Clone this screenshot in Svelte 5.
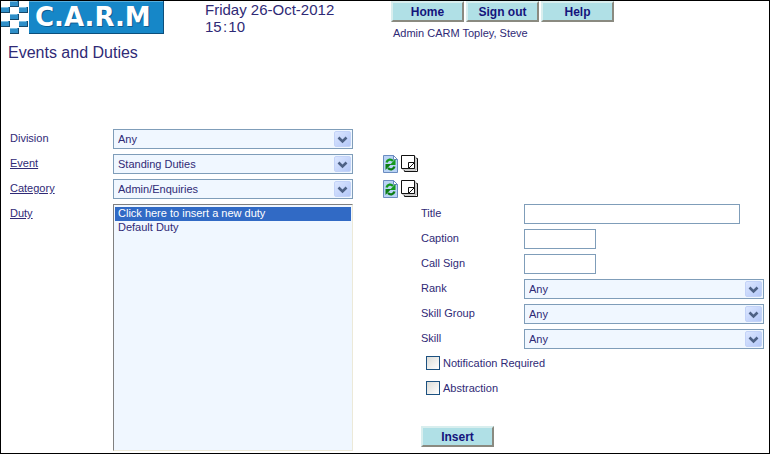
<script>
  const menu = ['Home', 'Sign out', 'Help'];

  let filters = [
    { id: 'division', label: 'Division', value: 'Any', link: false },
    { id: 'event', label: 'Event', value: 'Standing Duties', link: true },
    { id: 'category', label: 'Category', value: 'Admin/Enquiries', link: true }
  ];

  let duties = ['Click here to insert a new duty', 'Default Duty'];
  let duty = duties[0];

  let fields = [
    { id: 'title', label: 'Title', type: 'text', wide: true },
    { id: 'caption', label: 'Caption', type: 'text' },
    { id: 'callsign', label: 'Call Sign', type: 'text' },
    { id: 'rank', label: 'Rank', type: 'select' },
    { id: 'skillgroup', label: 'Skill Group', type: 'select' },
    { id: 'skill', label: 'Skill', type: 'select' }
  ];

  let checks = [
    { id: 'notify', label: 'Notification Required' },
    { id: 'abstraction', label: 'Abstraction' }
  ];

  // blue squares of the chequered band, [x, y]
  const squares = [[9, 0], [0, 6], [18, 6], [9, 13], [0, 20], [18, 20], [9, 27]];
</script>

{#snippet arrow()}
  <span class="arrow">
    <svg viewBox="0 0 15 15" width="15" height="15" aria-hidden="true">
      <path d="M3.5 5.5l4 4 4-4" fill="none" stroke="#4d6185" stroke-width="2.6" />
    </svg>
  </span>
{/snippet}

<div class="page">
  <header>
    <svg class="logo" viewBox="0 0 163 33" width="163" height="33" role="img" aria-label="C.A.R.M">
      <rect x="28" y="0" width="135" height="33" fill="#0c4f7c" />
      <rect x="28" y="0" width="134" height="32" fill="#1687c8" />
      <path d="M28 .5H162" stroke="#58aedd" />
      {#each squares as [x, y]}
        <rect {x} {y} width="9" height="6" fill="#16496b" />
        <rect {x} {y} width="8" height="5" fill="#2f8fc8" />
        <rect {x} {y} width="7" height="1" fill="#7fbfe2" />
      {/each}
      <text x="35" y="26" fill="#0d5c91">C.A.R.M</text>
      <text x="34" y="25" fill="#fff">C.A.R.M</text>
    </svg>
    <div class="date">Friday 26-Oct-2012<br />15&hairsp;:&hairsp;10</div>
    <div class="account">
      <nav>
        {#each menu as item}
          <button type="button">{item}</button>
        {/each}
      </nav>
      <div class="user">Admin CARM Topley, Steve</div>
    </div>
  </header>

  <h1>Events and Duties</h1>

  <main>
    {#each filters as f}
      <div class="row">
        <label for={f.id}>
          {#if f.link}<a href="#{f.id}">{f.label}</a>{:else}{f.label}{/if}
        </label>
        <div class="combo">
          <select id={f.id}><option>{f.value}</option></select>
          {@render arrow()}
        </div>
        {#if f.link}
          <div class="tools">
            <button type="button" class="icon" aria-label="Refresh {f.label}">
              <svg viewBox="0 0 15 18" width="15" height="18">
                <path d="M.5 .5h10l4 4v13h-14z" fill="#b9d3f5" stroke="#6b8cc0" />
                <path d="M10.5 .5v4h4z" fill="#fff" stroke="#6b8cc0" />
                <path d="M3.500 7.500C4.500 4.200 8 3.800 10 6" fill="none" stroke="#159a1c" stroke-width="2.400" />
                <path d="M12.500 4v6H6.800z" fill="#159a1c" />
                <path d="M11.500 11.500C10.500 14.800 7 15.200 5 13" fill="none" stroke="#0b7d13" stroke-width="2.400" />
                <path d="M2.500 15V9h5.700z" fill="#0b7d13" />
              </svg>
            </button>
            <button type="button" class="icon" aria-label="New {f.label}">
              <svg viewBox="0 0 17 18" width="17" height="18" fill="#fff" stroke="#111">
                <path d="M3.5 3.5h13v13h-13z" />
                <path d="M2 2h13v13H2z" stroke="#999" />
                <path d="M.5 .5h13v13H.5z" />
                <path d="M7.5 7.5h6v6h-6zM8 13l5-5" />
              </svg>
            </button>
          </div>
        {/if}
      </div>
    {/each}

    <div class="duty">
      <label for="duty"><a href="#duty">Duty</a></label>
      <select id="duty" class="list" size="17" bind:value={duty}>
        {#each duties as d}
          <option value={d}>{d}</option>
        {/each}
      </select>

      <form>
        {#each fields as f}
          <div class="row">
            <label for={f.id}>{f.label}</label>
            {#if f.type === 'select'}
              <div class="combo">
                <select id={f.id}><option>Any</option></select>
                {@render arrow()}
              </div>
            {:else}
              <input type="text" id={f.id} class:wide={f.wide} />
            {/if}
          </div>
        {/each}
        {#each checks as c}
          <div class="check">
            <input type="checkbox" id={c.id} />
            <label for={c.id}>{c.label}</label>
          </div>
        {/each}
        <button type="button" class="insert">Insert</button>
      </form>
    </div>
  </main>
</div>

<style>
  :global(body) {
    margin: 0;
    background: #fff;
  }
  .page {
    box-sizing: border-box;
    min-height: 100vh;
    border: 1px solid #000;
    font-family: "Liberation Sans", Arial, sans-serif;
    font-size: 11px;
    color: #2f2a76;
  }
  .page * {
    box-sizing: border-box;
  }
  header {
    display: flex;
    height: 42px;
  }
  .logo {
    flex: none;
  }
  .logo text {
    font: bold 26px "DejaVu Sans", sans-serif;
  }
  .date {
    width: 186px;
    margin-left: 41px;
    font-size: 15px;
    line-height: 17px;
  }
  nav {
    display: flex;
    gap: 2px;
  }
  button {
    width: 73px;
    height: 21px;
    padding: 0;
    border: 2px solid;
    border-color: #d8eeee #8a8a80 #8a8a80 #d8eeee;
    background: #b0e0e6;
    color: #14147c;
    font: bold 12px "Liberation Sans", Arial, sans-serif;
  }
  .user {
    padding: 4px 2px;
    line-height: 14px;
  }
  h1 {
    margin: 0 0 0 7px;
    font-size: 16px;
    font-weight: normal;
    line-height: 20px;
  }
  main {
    padding: 66px 5px 0 9px;
  }
  .row {
    display: flex;
    height: 20px;
    margin-bottom: 5px;
  }
  label {
    flex: none;
    width: 103px;
    line-height: 19px;
  }
  a {
    color: inherit;
  }
  .combo {
    display: flex;
    width: 240px;
    border: 1px solid #7f9db9;
    background: #f0f7ff;
  }
  .combo select {
    flex: 1;
    min-width: 0;
    padding: 0 4px;
    border: 0;
    appearance: none;
    background: none;
    color: inherit;
    font: inherit;
  }
  .arrow {
    display: flex;
    margin: 1px;
    align-items: center;
    border: 1px solid #c3d3f8;
    border-radius: 2px;
    background: linear-gradient(135deg, #dbe6ff, #b4c8f8);
    pointer-events: none;
  }
  .tools {
    display: flex;
    gap: 3px;
    margin-left: 30px;
  }
  .icon {
    width: auto;
    height: auto;
    border: 0;
    background: none;
  }
  .icon svg {
    display: block;
  }
  .duty {
    display: flex;
  }
  .list {
    width: 240px;
    height: 247px;
    padding: 2px 1px;
    overflow: hidden;
    border: 1px solid;
    border-color: #808080 #ece9d8 #ece9d8 #808080;
    border-radius: 0;
    background: #f0f7ff;
    color: inherit;
    font: inherit;
  }
  .list option {
    min-height: 14px;
    padding: 0 3px;
    line-height: 14px;
  }
  .list option:checked {
    background: #316ac5 linear-gradient(#316ac5, #316ac5);
    color: #fff;
  }
  form {
    flex: 1;
    margin-left: 68px;
  }
  form .combo {
    flex: 1;
  }
  input[type="text"] {
    width: 72px;
    padding: 0 4px;
    border: 1px solid #7f9db9;
    color: inherit;
    font: inherit;
  }
  input.wide {
    width: 216px;
  }
  .check {
    display: flex;
    gap: 3px;
    height: 20px;
    margin: 0 0 5px 5px;
    align-items: flex-start;
  }
  .check input {
    width: 14px;
    height: 14px;
    margin: 2px 0 0;
    appearance: none;
    border: 1px solid #1c5180;
    background: linear-gradient(135deg, #dcdcd7, #fff);
  }
  .check input:checked {
    background: #316ac5;
  }
  .check label {
    width: auto;
  }
  .insert {
    margin-top: 22px;
  }
</style>
